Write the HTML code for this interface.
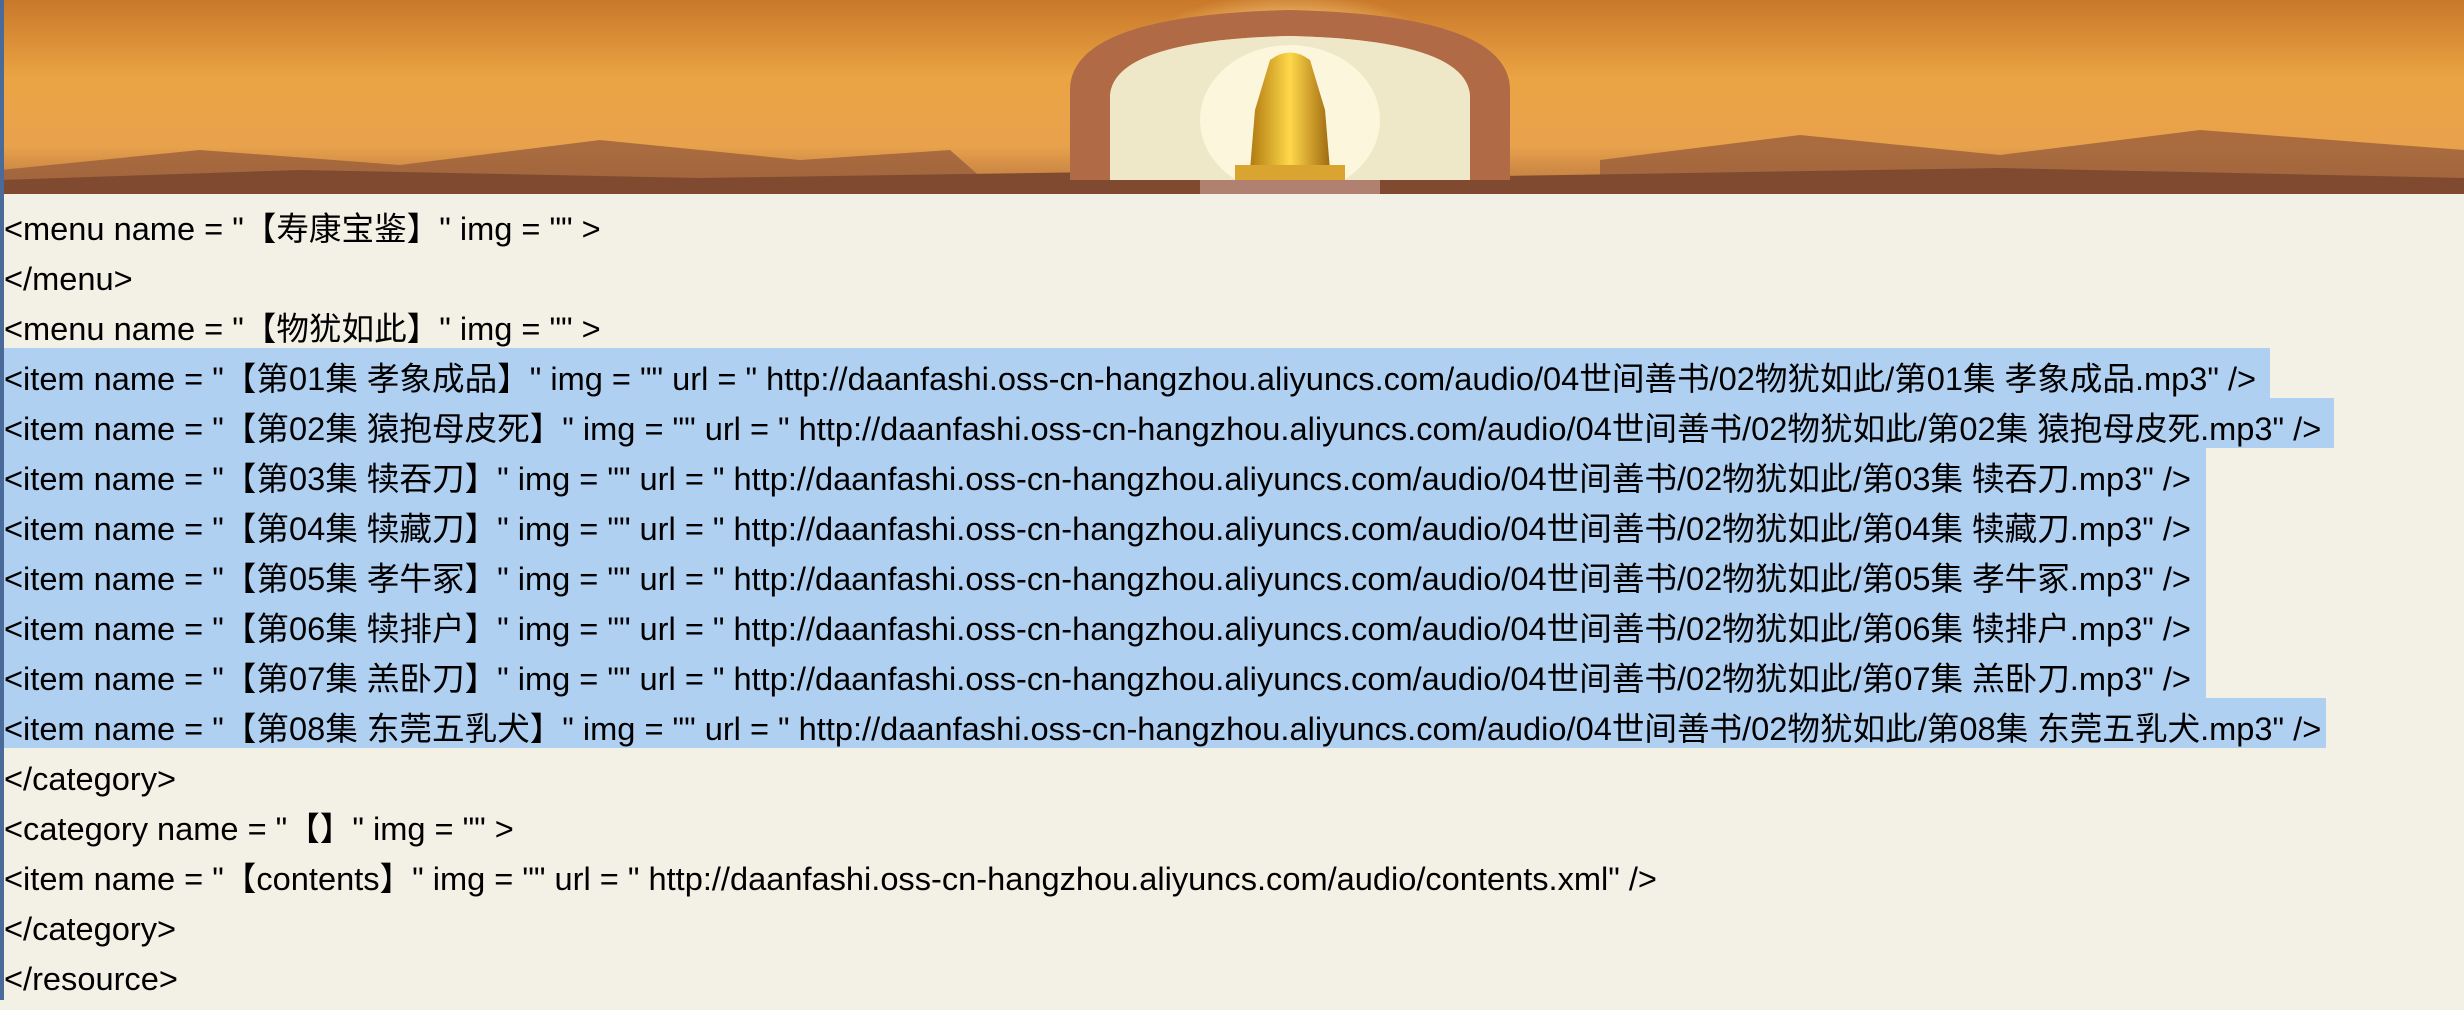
<!DOCTYPE html>
<html><head><meta charset="utf-8"><style>
html,body{margin:0;padding:0;width:2464px;height:1000px;overflow:hidden;background:#f3f0e5;}
body{font-family:"Liberation Sans","Noto Sans CJK SC",sans-serif;font-size:32.6px;color:#000;}
#banner{position:absolute;left:0;top:0;width:2464px;height:194px;}
#lb{position:absolute;left:0;top:0;width:4px;height:1000px;background:#4a6a9a;}
#txt{position:absolute;left:4px;top:198px;}
.l{height:50px;line-height:62px;white-space:nowrap;}
.h{background:#b0d0f2;display:inline-block;height:50px;vertical-align:top;}
</style></head><body>
<svg id="banner" viewBox="0 0 2464 194" preserveAspectRatio="none">
<defs>
<linearGradient id="sky" x1="0" y1="0" x2="0" y2="1"><stop offset="0" stop-color="#c9782a"/><stop offset=".4" stop-color="#eaa443"/><stop offset=".75" stop-color="#e9a24c"/><stop offset="1" stop-color="#b5733f"/></linearGradient>
<radialGradient id="sun" cx=".5" cy=".5" r=".5"><stop offset="0" stop-color="#fff7d0"/><stop offset=".6" stop-color="#f7dc96"/><stop offset="1" stop-color="#f0be6a" stop-opacity="0"/></radialGradient>
<linearGradient id="gold" x1="0" x2="1"><stop offset="0" stop-color="#b07a10"/><stop offset=".5" stop-color="#ffd84a"/><stop offset="1" stop-color="#a06a10"/></linearGradient>
</defs>
<rect width="2464" height="194" fill="url(#sky)"/>
<ellipse cx="1290" cy="100" rx="180" ry="110" fill="url(#sun)"/>
<path d="M0 170 L200 150 L400 165 L600 140 L800 160 L950 150 L1000 194 L0 194Z" fill="#9a5f3c" opacity=".8"/>
<path d="M1600 160 L1800 135 L2000 155 L2200 130 L2464 150 L2464 194 L1600 194Z" fill="#9a5f3c" opacity=".8"/>
<path d="M0 180 L300 170 L700 178 L1100 172 L1500 176 L2000 168 L2464 178 L2464 194 L0 194Z" fill="#7f4a30"/>
<path d="M1070 180 L1070 90 Q1070 15 1290 10 Q1510 15 1510 90 L1510 180 L1470 180 L1470 95 Q1465 40 1290 36 Q1115 40 1110 95 L1110 180Z" fill="#b06a45"/>
<path d="M1110 180 L1110 95 Q1115 40 1290 36 Q1465 40 1470 95 L1470 180Z" fill="#efe8c8"/>
<ellipse cx="1290" cy="120" rx="90" ry="75" fill="#fbf6dc"/>
<path d="M1270 60 Q1290 45 1310 60 L1325 110 L1330 170 L1250 170 L1255 110Z" fill="url(#gold)"/>
<rect x="1235" y="165" width="110" height="18" fill="#d9a530"/>
<rect x="1200" y="180" width="180" height="14" fill="#b08070"/>
</svg>
<div id="lb"></div>
<div id="txt">
<div class="l">&lt;menu name = "【寿康宝鉴】" img = "" &gt;</div>
<div class="l">&lt;/menu&gt;</div>
<div class="l">&lt;menu name = "【物犹如此】" img = "" &gt;</div>
<div class="l"><span class="h" style="width:2266px">&lt;item name = "【第01集 孝象成品】" img = "" url = " http://daanfashi.oss-cn-hangzhou.aliyuncs.com/audio/04世间善书/02物犹如此/第01集 孝象成品.mp3" /&gt;</span></div>
<div class="l"><span class="h" style="width:2330px">&lt;item name = "【第02集 猿抱母皮死】" img = "" url = " http://daanfashi.oss-cn-hangzhou.aliyuncs.com/audio/04世间善书/02物犹如此/第02集 猿抱母皮死.mp3" /&gt;</span></div>
<div class="l"><span class="h" style="width:2202px">&lt;item name = "【第03集 犊吞刀】" img = "" url = " http://daanfashi.oss-cn-hangzhou.aliyuncs.com/audio/04世间善书/02物犹如此/第03集 犊吞刀.mp3" /&gt;</span></div>
<div class="l"><span class="h" style="width:2202px">&lt;item name = "【第04集 犊藏刀】" img = "" url = " http://daanfashi.oss-cn-hangzhou.aliyuncs.com/audio/04世间善书/02物犹如此/第04集 犊藏刀.mp3" /&gt;</span></div>
<div class="l"><span class="h" style="width:2202px">&lt;item name = "【第05集 孝牛冢】" img = "" url = " http://daanfashi.oss-cn-hangzhou.aliyuncs.com/audio/04世间善书/02物犹如此/第05集 孝牛冢.mp3" /&gt;</span></div>
<div class="l"><span class="h" style="width:2202px">&lt;item name = "【第06集 犊排户】" img = "" url = " http://daanfashi.oss-cn-hangzhou.aliyuncs.com/audio/04世间善书/02物犹如此/第06集 犊排户.mp3" /&gt;</span></div>
<div class="l"><span class="h" style="width:2202px">&lt;item name = "【第07集 羔卧刀】" img = "" url = " http://daanfashi.oss-cn-hangzhou.aliyuncs.com/audio/04世间善书/02物犹如此/第07集 羔卧刀.mp3" /&gt;</span></div>
<div class="l"><span class="h" style="width:2322px">&lt;item name = "【第08集 东莞五乳犬】" img = "" url = " http://daanfashi.oss-cn-hangzhou.aliyuncs.com/audio/04世间善书/02物犹如此/第08集 东莞五乳犬.mp3" /&gt;</span></div>
<div class="l">&lt;/category&gt;</div>
<div class="l">&lt;category name = "【】" img = "" &gt;</div>
<div class="l">&lt;item name = "【contents】" img = "" url = " http://daanfashi.oss-cn-hangzhou.aliyuncs.com/audio/contents.xml" /&gt;</div>
<div class="l">&lt;/category&gt;</div>
<div class="l">&lt;/resource&gt;</div>
</div>
</body></html>
